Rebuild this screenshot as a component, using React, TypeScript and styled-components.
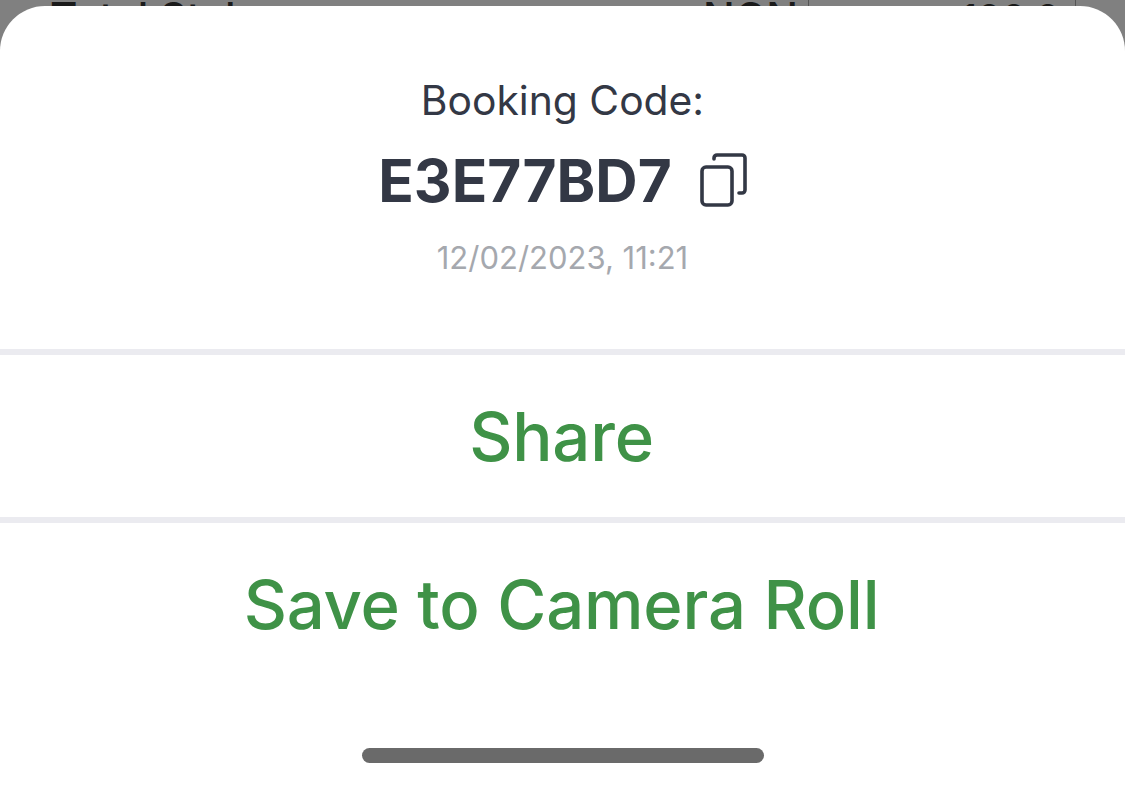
import React from 'react';
import styled, {createGlobalStyle} from "styled-components";

const GlobalStyle = createGlobalStyle`
  html, body {
    margin: 0;
    padding: 0;
    background: #808080;
  }
`

const CopyIcon = () => (
    <CopySvg width="47" height="54" viewBox="0 0 47 54" fill="none" stroke="#333845" strokeWidth="3.6" strokeLinecap="round" strokeLinejoin="round">
        <rect x="2" y="14" width="30" height="38" rx="4"/>
        <path d="M14 6V5a3 3 0 0 1 3-3h25a3 3 0 0 1 3 3v32a3 3 0 0 1-3 3h-3"/>
    </CopySvg>
);

export const App = () => {
    return (
        <Page>
            <GlobalStyle/>
            <BehindRow>
                <BehindLabel>Total Stake</BehindLabel>
                <BehindCurrency>NGN</BehindCurrency>
                <BehindAmount>100.0</BehindAmount>
            </BehindRow>
            <Sheet>
                <Header>
                    <Label>Booking Code:</Label>
                    <CodeRow>
                        <Code>E3E77BD7</Code>
                        <CopyIcon/>
                    </CodeRow>
                    <DateText>12/02/2023, 11:21</DateText>
                </Header>
                <Action>Share</Action>
                <Action>Save to Camera Roll</Action>
                <HomeBarWrap>
                    <HomeBar/>
                </HomeBarWrap>
            </Sheet>
        </Page>
    );
};

export default App;

const Page = styled.div`
  position: relative;
  width: 1125px;
  height: 787px;
  overflow: hidden;
  background-color: #808080;
  font-family: Inter, 'Noto Sans', sans-serif;
`

const BehindRow = styled.div`
  display: flex;
  height: 6px;
  overflow: hidden;
  font-size: 42px;
  font-weight: 500;
  line-height: 36px;
  color: #1a1a1a;
`

const BehindLabel = styled.div`
  width: 703px;
  padding-left: 50px;
  box-sizing: border-box;
`

const BehindCurrency = styled.div`
  width: 106px;
  border-right: 1px solid #555;
  box-sizing: border-box;
`

const BehindAmount = styled.div`
  width: 267px;
  padding-right: 15px;
  box-sizing: border-box;
  border-right: 1px solid #555;
  text-align: right;
  font-size: 38px;
`

const Sheet = styled.div`
  position: absolute;
  top: 6px;
  left: 0;
  right: 0;
  bottom: 0;
  display: flex;
  flex-direction: column;
  background-color: #fff;
  border-radius: 45px 45px 0 0;
`

const Header = styled.div`
  height: 343px;
  display: flex;
  flex-direction: column;
  align-items: center;
  padding-top: 69px;
  box-sizing: border-box;
`

const Label = styled.div`
  font-size: 40.8px;
  line-height: 50px;
  color: #333845;
`

const CodeRow = styled.div`
  display: flex;
  align-items: center;
  gap: 28px;
  margin-top: 26px;
  height: 60px;
`

const Code = styled.div`
  font-size: 58.6px;
  font-weight: 700;
  line-height: 60px;
  color: #333845;
`

const CopySvg = styled.svg`
  margin-top: -3px;
`

const DateText = styled.div`
  margin-top: 28px;
  font-size: 31px;
  line-height: 38px;
  color: #a5a8ae;
`

const Action = styled.div`
  height: 168px;
  box-sizing: border-box;
  border-top: 6px solid #ebebf0;
  padding-right: 2px;
  display: flex;
  align-items: center;
  justify-content: center;
  font-size: 67px;
  font-weight: 500;
  letter-spacing: -0.2px;
  color: #3f9247;
`

const HomeBarWrap = styled.div`
  flex: 1;
  display: flex;
  justify-content: center;
  padding-top: 63px;
`

const HomeBar = styled.div`
  width: 402px;
  height: 15px;
  border-radius: 8px;
  background-color: #6a6a6a;
`
